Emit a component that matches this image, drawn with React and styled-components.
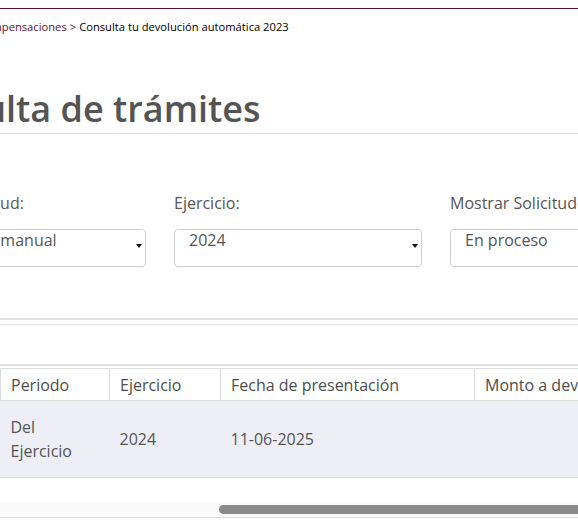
import React from "react";
import styled, { createGlobalStyle } from "styled-components";

const GlobalStyle = createGlobalStyle`
  html, body { margin: 0; padding: 0; background: #fff; }
  body {
    font-family: "Open Sans", "Noto Sans", sans-serif;
    color: #555;
    overflow: hidden;
  }
  * { box-sizing: border-box; }
`;

const Viewport = styled.div`
  width: 578px;
  height: 524px;
  overflow: hidden;
`;

const TopRule = styled.div`
  height: 9px;
  border-bottom: 1px solid #611232;
`;

const Page = styled.main`
  margin-left: -102px;
  width: 1100px;
`;

const Breadcrumb = styled.nav`
  display: flex;
  margin-top: 10px;
  margin-left: ${(p) => p.$shift}px;
  font-size: 11.2px;
  line-height: 16px;
  white-space: nowrap;
`;

const Crumb = styled.span`
  color: ${(p) => (p.$current ? "#000" : "#611232")};
`;

const Sep = styled.span`
  color: #611232;
  margin: 0 3px;
`;

const Title = styled.h1`
  margin: 50px 0 0;
  padding-bottom: 0;
  font-size: 36px;
  line-height: 48px;
  font-weight: 600;
  color: #545454;
  border-bottom: 1px solid #dcdcdc;
  white-space: nowrap;
`;

const FilterPanel = styled.section`
  display: grid;
  grid-template-columns: repeat(3, 248px);
  column-gap: 28px;
  padding: 59px 0 51px;
  border-bottom: 2px solid #e2e2e2;
`;

const Field = styled.div`
  display: flex;
  flex-direction: column;
  gap: 16px;
`;

const Label = styled.label`
  font-size: 16px;
  line-height: 20px;
  color: #555;
  white-space: nowrap;
`;

const Select = styled.div`
  display: flex;
  height: 38px;
  padding: 1px 3px 0 14px;
  border: 1px solid #cfcfcf;
  border-radius: 4px;
  background: #fff;
  font-size: 16px;
  line-height: 18px;
  color: #555;
  white-space: nowrap;
`;

const Value = styled.span`
  flex: 1;
`;

const Caret = styled.span`
  width: 0;
  height: 0;
  margin-top: 13px;
  border-left: 3px solid transparent;
  border-right: 3px solid transparent;
  border-top: 4px solid #111;
`;

const Results = styled.section`
  margin-top: 4px;
  border-top: 1px solid #e6e6e6;
`;

const Toolbar = styled.div`
  height: 41px;
  border-bottom: 2px solid #e2e2e2;
`;

const TableWrap = styled.div`
  margin-top: 2px;
`;

const Table = styled.table`
  border-collapse: collapse;
  table-layout: fixed;
  width: 1000px;
  font-size: 16px;
  color: #555;
`;

const Th = styled.th`
  padding: 4px 10px 3px;
  line-height: 24px;
  font-weight: 500;
  text-align: left;
  color: #4d4d4d;
  background: #fff;
  border: 1px solid #dddddd;
  white-space: nowrap;
  overflow: hidden;
`;

const Tr = styled.tr`
  background: ${(p) => (p.$striped ? "#eeeef6" : "#fff")};
  border-bottom: 1px solid #dddddd;
`;

const Td = styled.td`
  padding: 14px 10px;
  line-height: 24px;
  vertical-align: middle;
`;

const Track = styled.div`
  display: flex;
  align-items: center;
  margin-top: 24px;
  height: 16px;
  background: #fafafa;
  border-bottom: 1px solid #dddddd;
`;

const Thumb = styled.div`
  margin-left: ${(p) => p.$offset}px;
  width: ${(p) => p.$width}px;
  height: 9px;
  border-radius: 5px;
  background: #8a8a8a;
`;

const filters = [
  { label: "Tipo de solicitud:", value: "Devolución manual", caret: true },
  { label: "Ejercicio:", value: "2024", caret: true },
  { label: "Mostrar Solicitudes:", value: "En proceso", caret: true },
];

const columns = [
  { key: "folio", label: "Folio", width: 102 },
  { key: "periodo", label: "Periodo", width: 109 },
  { key: "ejercicio", label: "Ejercicio", width: 111 },
  { key: "fecha", label: "Fecha de presentación", width: 254 },
  { key: "monto", label: "Monto a devolver", width: 200 },
  { key: "estado", label: "Estado", width: 224 },
];

const rows = [
  {
    folio: "",
    periodo: "Del Ejercicio",
    ejercicio: "2024",
    fecha: "11-06-2025",
    monto: "",
    estado: "",
  },
];

export default function App() {
  return (
    <>
      <GlobalStyle />
      <Viewport>
        <TopRule />
        <Page>
          <Breadcrumb $shift={-40}>
            <Crumb>Inicio</Crumb>
            <Sep>&gt;</Sep>
            <Crumb>Devoluciones y compensaciones</Crumb>
            <Sep>&gt;</Sep>
            <Crumb $current>Consulta tu devolución automática 2023</Crumb>
          </Breadcrumb>
          <Title>Consulta de trámites</Title>
          <FilterPanel>
            {filters.map((f) => (
              <Field key={f.label}>
                <Label>{f.label}</Label>
                <Select>
                  <Value>{f.value}</Value>
                  {f.caret && <Caret />}
                </Select>
              </Field>
            ))}
          </FilterPanel>
          <Results>
            <Toolbar />
            <TableWrap>
              <Table>
                <colgroup>
                  {columns.map((c) => (
                    <col key={c.key} style={{ width: c.width }} />
                  ))}
                </colgroup>
                <thead>
                  <tr>
                    {columns.map((c) => (
                      <Th key={c.key}>{c.label}</Th>
                    ))}
                  </tr>
                </thead>
                <tbody>
                  {rows.map((r, i) => (
                    <Tr key={i} $striped={i % 2 === 0}>
                      {columns.map((c) => (
                        <Td key={c.key}>{r[c.key]}</Td>
                      ))}
                    </Tr>
                  ))}
                </tbody>
              </Table>
              <Track>
                <Thumb $offset={321} $width={520} />
              </Track>
            </TableWrap>
          </Results>
        </Page>
      </Viewport>
    </>
  );
}
